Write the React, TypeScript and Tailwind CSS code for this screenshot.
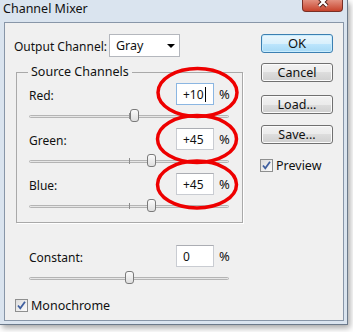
import React from 'react';

function Slider({ value }: { value: number }) {
  // range -200..200 mapped on a 200px track
  const center = 100 + value / 2;
  return (
    <div className="relative h-[23px] w-[200px]">
      <div className="absolute left-0 right-0 top-[10px] h-[3px] rounded-full border border-[#b4b4b4] bg-[#e6e6e6]" />
      <div className="absolute left-[100px] top-[8px] h-[6px] w-px bg-[#8c8c8c]" />
      <div
        className="absolute top-[4px] h-[13px] w-[9px] rounded-[3px] border border-[#7a7a7a] bg-[linear-gradient(#fbfbfb,#dedede)]"
        style={{ left: center - 4.5 }}
      />
    </div>
  );
}

function NumberBox({ value, focused }: { value: string; focused?: boolean }) {
  return (
    <div
      className={
        focused
          ? 'flex h-[22px] w-[38px] items-center border border-[#8bb6e2] bg-white pl-[6px]'
          : 'flex h-[22px] w-[38px] items-center border border-[#c9ccd2] border-t-[#abadb3] bg-white pl-[6px]'
      }
    >
      <span>{value}</span>
      {focused && <span className="ml-px h-[15px] w-px bg-black" />}
    </div>
  );
}

function ValueRow({ label, value, focused }: { label: string; value: string; focused?: boolean }) {
  return (
    <div className="flex h-[22px] items-center">
      <span className="w-[147px] pt-[3px]">{label}</span>
      <NumberBox value={value} focused={focused} />
      <span className="ml-[5px] text-[13px]">%</span>
    </div>
  );
}

function Checkbox() {
  return (
    <div className="flex h-[13px] w-[13px] items-center justify-center border border-[#8e8f8f] bg-[linear-gradient(135deg,#dcdcdc,#fbfbfb)]">
      <svg width="11" height="11" viewBox="0 0 11 11">
        <path d="M2 5.5 L4.3 8.3 L9 1.8" fill="none" stroke="#3f5f9f" strokeWidth="1.8" />
      </svg>
    </div>
  );
}

function Button({ label, primary }: { label: string; primary?: boolean }) {
  return (
    <button
      className={
        primary
          ? 'flex h-[19px] w-[72px] items-center justify-center rounded-[3px] border border-[#3c7fb1] bg-[linear-gradient(#eaf6fd_0%,#d9f0fc_50%,#bee6fd_50%,#a7d9f5_100%)] text-[13px] shadow-[inset_0_0_0_1px_#c9ecfd]'
          : 'flex h-[19px] w-[72px] items-center justify-center rounded-[3px] border border-[#707070] bg-[linear-gradient(#f2f2f2_0%,#ebebeb_50%,#dddddd_50%,#cfcfcf_100%)] text-[12.5px] shadow-[inset_0_0_0_1px_#fbfbfb]'
      }
    >
      {label}
    </button>
  );
}

export default function App() {
  return (
    <div className="relative h-[332px] w-[353px] overflow-hidden bg-white font-['Noto_Sans','Open_Sans',sans-serif] text-[12px] leading-[15px] text-[#111]">
      <div className="flex h-[325px] w-[348px] flex-col border-r border-b border-[#6c7a8b] bg-[#dae4ef] shadow-[2px_3px_6px_rgba(0,0,0,0.35)]">
        {/* title bar */}
        <div className="flex h-[22px] shrink-0 items-start justify-between">
          <span className="pl-[3px] pt-px text-[12.5px] leading-[15px]">Channel Mixer</span>
          <div className="relative mr-[4px] h-[12px] w-[41px] overflow-hidden rounded-b-[4px] border border-t-0 border-[#7a2f25] bg-[linear-gradient(#e3907f,#c7432c)]">
            <svg className="absolute left-[14px] top-[-4px]" width="12" height="12" viewBox="0 0 12 12">
              <path d="M2 2 L10 10 M10 2 L2 10" stroke="#4b1c16" strokeWidth="4" />
              <path d="M2 2 L10 10 M10 2 L2 10" stroke="#fff" strokeWidth="2.2" />
            </svg>
          </div>
        </div>

        {/* client area */}
        <div className="mb-[3px] ml-[4px] mr-[3px] flex flex-1 border border-[#8896a8] bg-[#f0f0f0]">
          <div className="flex w-[256px] flex-col pl-[9px]">
            <div className="mt-[11px] flex h-[23px] items-center">
              <span className="w-[95px] pt-[2px]">Output Channel:</span>
              <div className="flex h-[23px] w-[71px] items-center justify-between border border-[#b4b7bd] bg-white pl-[6px] pr-[4px]">
                <span className="text-[12.5px]">Gray</span>
                <svg width="8" height="4" viewBox="0 0 8 4">
                  <path d="M0 0 H8 L4 4 Z" fill="#000" />
                </svg>
              </div>
            </div>

            <fieldset className="ml-[2px] mt-[8px] w-[227px] border border-[#a9a9a9] px-[12px] pb-[4px] pt-[4px] shadow-[1px_1px_0_#fff]">
              <legend className="ml-[-1px] px-[3px] text-[12.5px] leading-[14px]">Source Channels</legend>
              <ValueRow label="Red:" value="+10" focused />
              <Slider value={10} />
              <ValueRow label="Green:" value="+45" />
              <Slider value={45} />
              <ValueRow label="Blue:" value="+45" />
              <Slider value={45} />
            </fieldset>

            <div className="ml-[15px] mt-[22px] flex flex-col">
              <ValueRow label="Constant:" value="0" />
              <Slider value={0} />
            </div>

            <div className="ml-px mt-[8px] flex h-[15px] items-center gap-[3px]">
              <Checkbox />
              <span className="text-[12.5px]">Monochrome</span>
            </div>
          </div>

          <div className="flex flex-col pt-[11px]">
            <Button label="OK" primary />
            <div className="mt-[10px]">
              <Button label="Cancel" />
            </div>
            <div className="mt-[13px]">
              <Button label="Load..." />
            </div>
            <div className="mt-[11px]">
              <Button label="Save..." />
            </div>
            <div className="ml-[-1px] mt-[14px] flex h-[15px] items-center gap-[3px]">
              <Checkbox />
              <span className="text-[12.5px]">Preview</span>
            </div>
          </div>
        </div>
      </div>

      {/* red highlight rings drawn over the dialog */}
      <svg className="pointer-events-none absolute left-0 top-0" width="353" height="332" viewBox="0 0 353 332">
        <g fill="none" stroke="#ee0000" strokeWidth="3.5">
          <ellipse cx="197.5" cy="92.5" rx="39.5" ry="24" />
          <ellipse cx="197" cy="139" rx="39.5" ry="23.5" />
          <ellipse cx="197" cy="184.5" rx="39.5" ry="23.5" />
        </g>
      </svg>
    </div>
  );
}
